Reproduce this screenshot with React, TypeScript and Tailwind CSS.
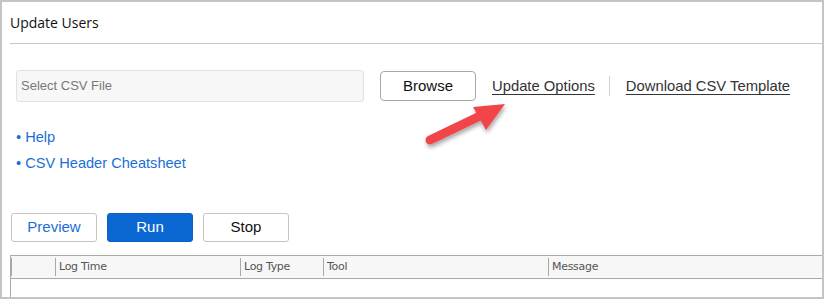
import React from 'react';

const columns = [
  { label: '', w: 'w-[44px]' },
  { label: 'Log Time', w: 'w-[185px]' },
  { label: 'Log Type', w: 'w-[83px]' },
  { label: 'Tool', w: 'w-[225px]' },
  { label: 'Message', w: 'flex-1' },
];

export default function App() {
  return (
    <div className="relative w-[824px] h-[299px] overflow-hidden border-2 border-[#c4c4c4] bg-white font-['Liberation_Sans',Arial,sans-serif]">
      <div className="pl-[8px]">
        {/* Title */}
        <div className="h-[42px] border-b border-[#c6c6c6] flex items-center">
          <span className="text-[14px] text-[#111] font-['Open_Sans',sans-serif] -mt-[1px]">Update Users</span>
        </div>

        {/* File row */}
        <div className="flex items-center h-[32px] mt-[26px] pl-[6px]">
          <div className="w-[348px] h-[32px] rounded-[3px] border border-[#e2e2e2] bg-[#f7f7f7] flex items-center pl-[4px]">
            <span className="text-[13px] text-[#777]">Select CSV File</span>
          </div>
          <button className="ml-[16px] w-[96px] h-[30px] rounded-[4px] border border-[#a8a8a8] bg-white text-[15px] text-[#111]">
            Browse
          </button>
          <a className="ml-[16px] text-[14.8px] text-[#333] underline underline-offset-[3px]">Update Options</a>
          <span className="ml-[14px] w-px h-[20px] bg-[#c9d3de]" />
          <a className="ml-[16px] text-[14.8px] text-[#333] underline underline-offset-[3px]">Download CSV Template</a>
        </div>

        {/* Help links */}
        <div className="mt-[25px] pl-[6px] flex flex-col gap-[6px] text-[14.6px] leading-[20px] text-[#1a6fd6]">
          <span>• Help</span>
          <span>• CSV Header Cheatsheet</span>
        </div>

        {/* Actions */}
        <div className="mt-[40px] pl-[1px] flex gap-[10px]">
          <button className="w-[86px] h-[29px] rounded-[3px] border border-[#c4c4c4] bg-white text-[15px] text-[#1a6fd6]">Preview</button>
          <button className="w-[86px] h-[29px] rounded-[3px] border border-[#0a5fc2] bg-[#0b67d1] text-[15px] text-white">Run</button>
          <button className="w-[86px] h-[29px] rounded-[3px] border border-[#c4c4c4] bg-white text-[15px] text-[#111]">Stop</button>
        </div>

        {/* Log table */}
        <div className="mt-[13px] border-l border-t border-[#a9a9a9]">
          <div className="flex h-[23px] bg-[#f7f7f7] border-b border-[#a9a9a9]">
            {columns.map((c, i) => (
              <div key={i} className={`${c.w} flex items-center`}>
                <div className="flex items-center h-[18px] border-l border-[#a9a9a9] pl-[3px] text-[11px] text-[#555] font-['DejaVu_Sans',sans-serif] tracking-[-0.3px]">
                  {i > 0 ? c.label : null}
                </div>
              </div>
            ))}
          </div>
          <div className="h-[20px]" />
        </div>
      </div>

      {/* Red arrow annotation */}
      <svg className="absolute left-[410px] top-[93px]" width="110" height="60" viewBox="0 0 110 60">
        <defs>
          <filter id="sh" x="-20%" y="-20%" width="140%" height="160%">
            <feDropShadow dx="1" dy="3" stdDeviation="2" floodColor="#000" floodOpacity="0.35" />
          </filter>
        </defs>
        <g filter="url(#sh)">
          <line x1="18" y1="45" x2="70" y2="20" stroke="#f2454a" strokeWidth="9" strokeLinecap="round" />
          <polygon points="93,9 61,12 74,35" fill="#f2454a" />
        </g>
      </svg>
    </div>
  );
}
